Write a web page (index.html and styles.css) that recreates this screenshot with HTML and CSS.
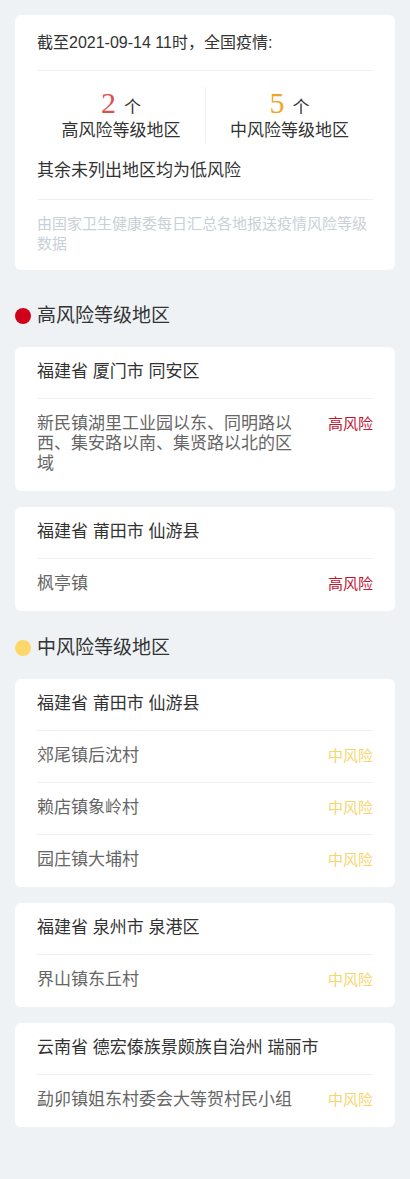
FILE: index.html
```html
<!DOCTYPE html>
<html lang="zh-CN">
<head>
<meta charset="utf-8">
<title>全国疫情风险等级地区</title>
<link rel="stylesheet" href="styles.css">
</head>
<body>
<main class="page">
  <section class="card summary">
    <div class="summary-title">截至2021-09-14 11时，全国疫情:</div>
    <div class="stats">
      <div class="stat">
        <div class="stat-num"><span class="num high">2</span><span class="unit">个</span></div>
        <div class="stat-label">高风险等级地区</div>
      </div>
      <div class="stat">
        <div class="stat-num"><span class="num mid">5</span><span class="unit">个</span></div>
        <div class="stat-label">中风险等级地区</div>
      </div>
    </div>
    <div class="summary-note">其余未列出地区均为低风险</div>
    <div class="summary-source">由国家卫生健康委每日汇总各地报送疫情风险等级数据</div>
  </section>

  <h2 class="level-title"><span class="dot dot-high"></span>高风险等级地区</h2>

  <section class="card area">
    <div class="area-head">福建省 厦门市 同安区</div>
    <div class="area-row"><span class="area-name">新民镇湖里工业园以东、同明路以西、集安路以南、集贤路以北的区域</span><span class="tag tag-high">高风险</span></div>
  </section>

  <section class="card area">
    <div class="area-head">福建省 莆田市 仙游县</div>
    <div class="area-row"><span class="area-name">枫亭镇</span><span class="tag tag-high">高风险</span></div>
  </section>

  <h2 class="level-title"><span class="dot dot-mid"></span>中风险等级地区</h2>

  <section class="card area">
    <div class="area-head">福建省 莆田市 仙游县</div>
    <div class="area-row"><span class="area-name">郊尾镇后沈村</span><span class="tag tag-mid">中风险</span></div>
    <div class="area-row"><span class="area-name">赖店镇象岭村</span><span class="tag tag-mid">中风险</span></div>
    <div class="area-row"><span class="area-name">园庄镇大埔村</span><span class="tag tag-mid">中风险</span></div>
  </section>

  <section class="card area">
    <div class="area-head">福建省 泉州市 泉港区</div>
    <div class="area-row"><span class="area-name">界山镇东丘村</span><span class="tag tag-mid">中风险</span></div>
  </section>

  <section class="card area">
    <div class="area-head">云南省 德宏傣族景颇族自治州 瑞丽市</div>
    <div class="area-row"><span class="area-name">勐卯镇姐东村委会大等贺村民小组</span><span class="tag tag-mid">中风险</span></div>
  </section>
</main>
</body>
</html>
```

FILE: styles.css
```css
html, body {
  margin: 0;
  padding: 0;
  background: #eef2f5;
}

body {
  font-family: "Liberation Sans", "Noto Sans CJK SC", sans-serif;
  color: #333;
  min-height: 1179px;
}

/* column layout keeps vertical margins from collapsing */
.page {
  display: flex;
  flex-direction: column;
  padding: 15px 15px 40px;
}

.card {
  background: #fff;
  border-radius: 6px;
  padding: 0 22px;
  margin-bottom: 16px;
}

/* summary card */
.summary {
  padding-top: 16px;
  padding-bottom: 16px;
  margin-bottom: 25px;
}

.summary-title {
  font-size: 16px;
  line-height: 24px;
  padding-bottom: 15px;
  border-bottom: 1px solid #eef0f2;
  color: #333;
}

.stats {
  display: grid;
  grid-template-columns: 1fr 1fr;
  margin-top: 16px;
}

.stat {
  text-align: center;
}

.stat + .stat {
  border-left: 1px solid #eef0f2;
}

.stat-num {
  height: 32px;
  line-height: 32px;
}

.num {
  font-family: "Liberation Serif", serif;
  font-size: 30px;
  margin-right: 8px;
}

.num.high { color: #d9534f; }
.num.mid { color: #f0a623; }

.unit {
  font-size: 17px;
  color: #333;
}

.stat-label {
  font-size: 17px;
  line-height: 24px;
}

.summary-note {
  font-size: 17px;
  line-height: 24px;
  margin-top: 16px;
  padding-bottom: 16px;
  border-bottom: 1px solid #eef0f2;
}

.summary-source {
  font-size: 15px;
  line-height: 20px;
  padding-top: 14px;
  color: #c8d0d8;
}

/* level headings */
.level-title {
  display: flex;
  align-items: center;
  margin: 8px 0 18px;
  font-size: 19px;
  line-height: 26px;
  font-weight: normal;
  color: #333;
}

.dot {
  width: 16px;
  height: 16px;
  border-radius: 50%;
  margin-right: 6px;
  flex: none;
}

.dot-high { background: #d0021b; }
.dot-mid { background: #fdd76a; }

/* area cards */
.area-head {
  font-size: 17px;
  line-height: 20px;
  padding: 15px 0 16px;
  color: #333;
}

.area-row {
  display: flex;
  align-items: flex-start;
  justify-content: space-between;
  border-top: 1px solid #eef0f2;
  padding: 15px 0 16px;
}

.area-row:last-child {
  padding-bottom: 17px;
}

.area-name {
  flex: 1;
  margin-right: 28px;
  font-size: 17px;
  line-height: 20px;
  color: #666;
}

.tag {
  flex: none;
  font-size: 15px;
  line-height: 20px;
}

.tag-high { color: #c0132d; }
.tag-mid { color: #f9d56e; }
```
